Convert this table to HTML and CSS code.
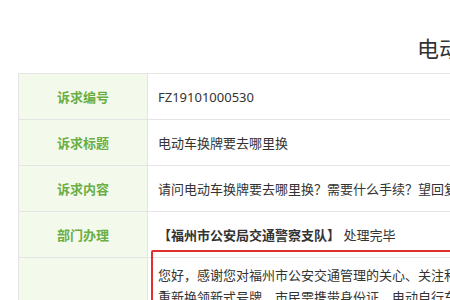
FILE: index.html
```html
<!DOCTYPE html>
<html lang="zh-CN">
<head>
<meta charset="utf-8">
<title>诉求详情</title>
<link rel="stylesheet" href="styles.css">
</head>
<body>
<div class="page">
  <h1 class="title">电动车换牌要去哪里换</h1>
  <table class="detail">
    <tr>
      <th>诉求编号</th>
      <td>FZ19101000530</td>
    </tr>
    <tr>
      <th>诉求标题</th>
      <td>电动车换牌要去哪里换</td>
    </tr>
    <tr>
      <th>诉求内容</th>
      <td>请问电动车换牌要去哪里换？需要什么手续？望回复，谢谢！</td>
    </tr>
    <tr>
      <th>部门办理</th>
      <td><b class="dept">【福州市公安局交通警察支队】</b> 处理完毕</td>
    </tr>
    <tr class="reply-row">
      <th></th>
      <td class="reply">
        <div class="mark"></div>
        <p>您好，感谢您对福州市公安交通管理的关心、关注和支持。关于您反映的问题，现答复如下：</p>
        <p>重新换领新式号牌，市民需携带身份证、电动自行车购车发票等材料。</p>
      </td>
    </tr>
  </table>
</div>
</body>
</html>
```

FILE: styles.css
```css
html, body {
  margin: 0;
  padding: 0;
  background: #fff;
  overflow: hidden;
}
body {
  font-family: "Noto Sans", "Noto Sans CJK SC", sans-serif;
  color: #333;
}
.page {
  width: 1000px;
  padding: 33px 0 0 18px;
}
.title {
  margin: 0 0 10px;
  padding-left: 399px;
  font-size: 22px;
  line-height: 30px;
  font-weight: normal;
  color: #333;
  white-space: nowrap;
}
.detail {
  width: 1000px;
  border-collapse: collapse;
  border: 1px solid #e4e4e4;
  font-size: 13px;
}
.detail th {
  width: 129px;
  height: 45px;
  padding: 0;
  background: #f3faec;
  color: #6aae44;
  font-weight: bold;
  text-align: center;
  border: 1px solid #e4e4e4;
  box-sizing: border-box;
}
.detail td {
  height: 45px;
  padding: 0 10px;
  border: 1px solid #e4e4e4;
  white-space: nowrap;
  text-align: left;
}
.dept {
  color: #333;
}
.detail td.reply {
  position: relative;
  vertical-align: top;
  padding-top: 6px;
}
.reply p {
  margin: 0;
  line-height: 22px;
}
.mark {
  position: absolute;
  left: 3px;
  top: -8px;
  width: 900px;
  height: 200px;
  border: 2px solid #e02f2f;
  border-radius: 2px;
}
```
